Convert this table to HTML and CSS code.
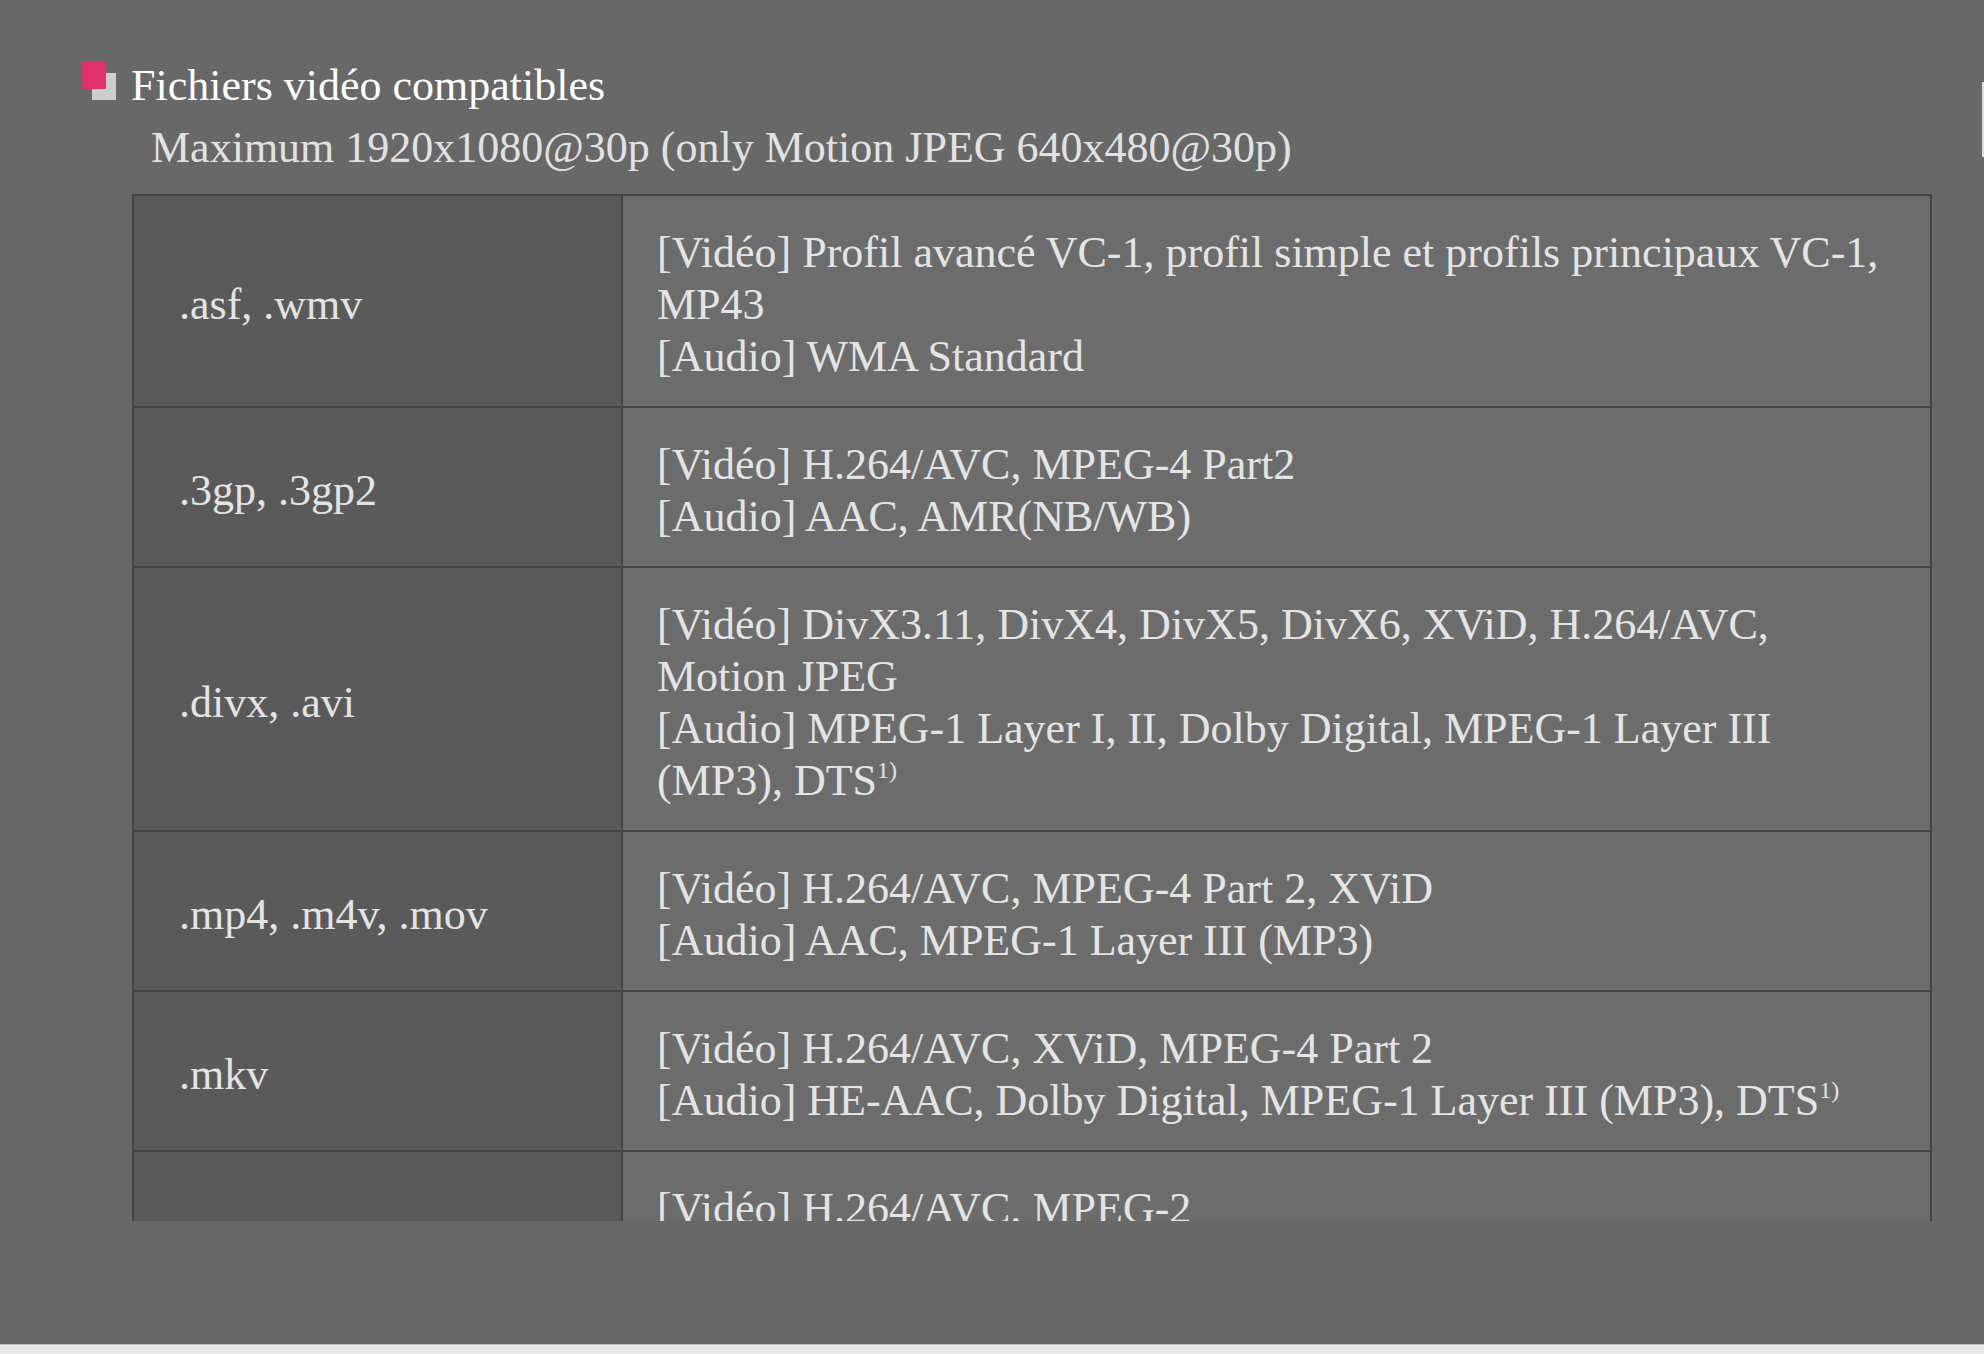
FILE: index.html
```html
<!DOCTYPE html>
<html lang="fr">

<head>
    <meta charset="UTF-8">
    <meta name="viewport" content="width=device-width, initial-scale=1.0">
    <title>Fichiers vidéo compatibles</title>
    <link rel="stylesheet" href="styles.css">
</head>

<body>
    <main class="page">
        <section class="video-files">
            <h2 class="section-title"><span class="bullet"></span>Fichiers vidéo compatibles</h2>
            <p class="max-res">Maximum 1920x1080@30p (only Motion JPEG 640x480@30p)</p>

            <!-- Supported formats -->
            <div class="table-clip">
                <table class="formats">
                    <colgroup>
                        <col class="col-ext">
                        <col class="col-codecs">
                    </colgroup>
                    <tr>
                        <td class="ext">.asf, .wmv</td>
                        <td class="codecs">[Vidéo] Profil avancé VC-1, profil simple et profils principaux VC-1, MP43<br>[Audio] WMA Standard</td>
                    </tr>
                    <tr>
                        <td class="ext">.3gp, .3gp2</td>
                        <td class="codecs">[Vidéo] H.264/AVC, MPEG-4 Part2<br>[Audio] AAC, AMR(NB/WB)</td>
                    </tr>
                    <tr>
                        <td class="ext">.divx, .avi</td>
                        <td class="codecs">[Vidéo] DivX3.11, DivX4, DivX5, DivX6, XViD, H.264/AVC, Motion JPEG<br>[Audio] MPEG-1 Layer I, II, Dolby Digital, MPEG-1 Layer III (MP3), DTS<sup class="note">1)</sup></td>
                    </tr>
                    <tr>
                        <td class="ext">.mp4, .m4v, .mov</td>
                        <td class="codecs">[Vidéo] H.264/AVC, MPEG-4 Part 2, XViD<br>[Audio] AAC, MPEG-1 Layer III (MP3)</td>
                    </tr>
                    <tr>
                        <td class="ext">.mkv</td>
                        <td class="codecs">[Vidéo] H.264/AVC, XViD, MPEG-4 Part 2<br>[Audio] HE-AAC, Dolby Digital, MPEG-1 Layer III (MP3), DTS<sup class="note">1)</sup></td>
                    </tr>
                    <tr>
                        <td class="ext">.ts, .trp, .tp</td>
                        <td class="codecs">[Vidéo] H.264/AVC, MPEG-2<br>[Audio] MPEG-1 Layer I, II, MPEG-1 Layer III (MP3), Dolby Digital, Dolby Digital Plus, AAC, HE-AAC</td>
                    </tr>
                </table>
            </div>
        </section>

        <span class="scroll-mark"></span>
    </main>

    <footer class="status-bar"></footer>
</body>

</html>
```

FILE: styles.css
```css
body {
    margin: 0;
    background-color: #686868;
    font-family: "Liberation Serif", "Times New Roman", serif;
}

.page {
    position: relative;
    height: 1344px;
    padding-top: 60px;
    box-sizing: border-box;
}

.section-title {
    display: flex;
    align-items: flex-start;
    margin: 0 0 0 82px;
    color: #ffffff;
    font-size: 44px;
    line-height: 52px;
    font-weight: normal;
}

/* pink square with grey drop square */
.bullet {
    position: relative;
    flex: none;
    width: 34px;
    height: 38px;
    margin: 2px 15px 0 0;
}

.bullet::before {
    content: "";
    position: absolute;
    left: 10px;
    top: 11px;
    width: 24px;
    height: 27px;
    background-color: #cdcdcd;
}

.bullet::after {
    content: "";
    position: absolute;
    left: 0;
    top: 0;
    width: 24px;
    height: 27px;
    background-color: #e0306e;
}

.max-res {
    margin: 10px 0 0 151px;
    color: #e2e2e2;
    font-size: 44px;
    line-height: 52px;
}

.table-clip {
    margin: 20px 0 0 132px;
    height: 1027px;
    overflow: hidden;
}

.formats {
    width: 1800px;
    border-collapse: collapse;
    table-layout: fixed;
    border: 2px solid #444444;
}

.col-ext {
    width: 489px;
}

.formats td {
    border: 2px solid #444444;
    padding: 31px 40px 23px 34px;
    color: #e4e4e4;
    font-size: 44px;
    line-height: 52px;
    vertical-align: middle;
}

.formats td.ext {
    padding-left: 45px;
    background-color: #5a5a5a;
}

.formats td.codecs {
    background-color: #6c6c6c;
}

.note {
    font-size: 24px;
    line-height: 0;
    vertical-align: 17px;
}

.scroll-mark {
    position: absolute;
    right: 0;
    top: 82px;
    width: 2px;
    height: 75px;
    background-color: #dedede;
}

.status-bar {
    height: 9px;
    border-top: 1px solid #bdbdbd;
    background-color: #e8e8e8;
}
```
